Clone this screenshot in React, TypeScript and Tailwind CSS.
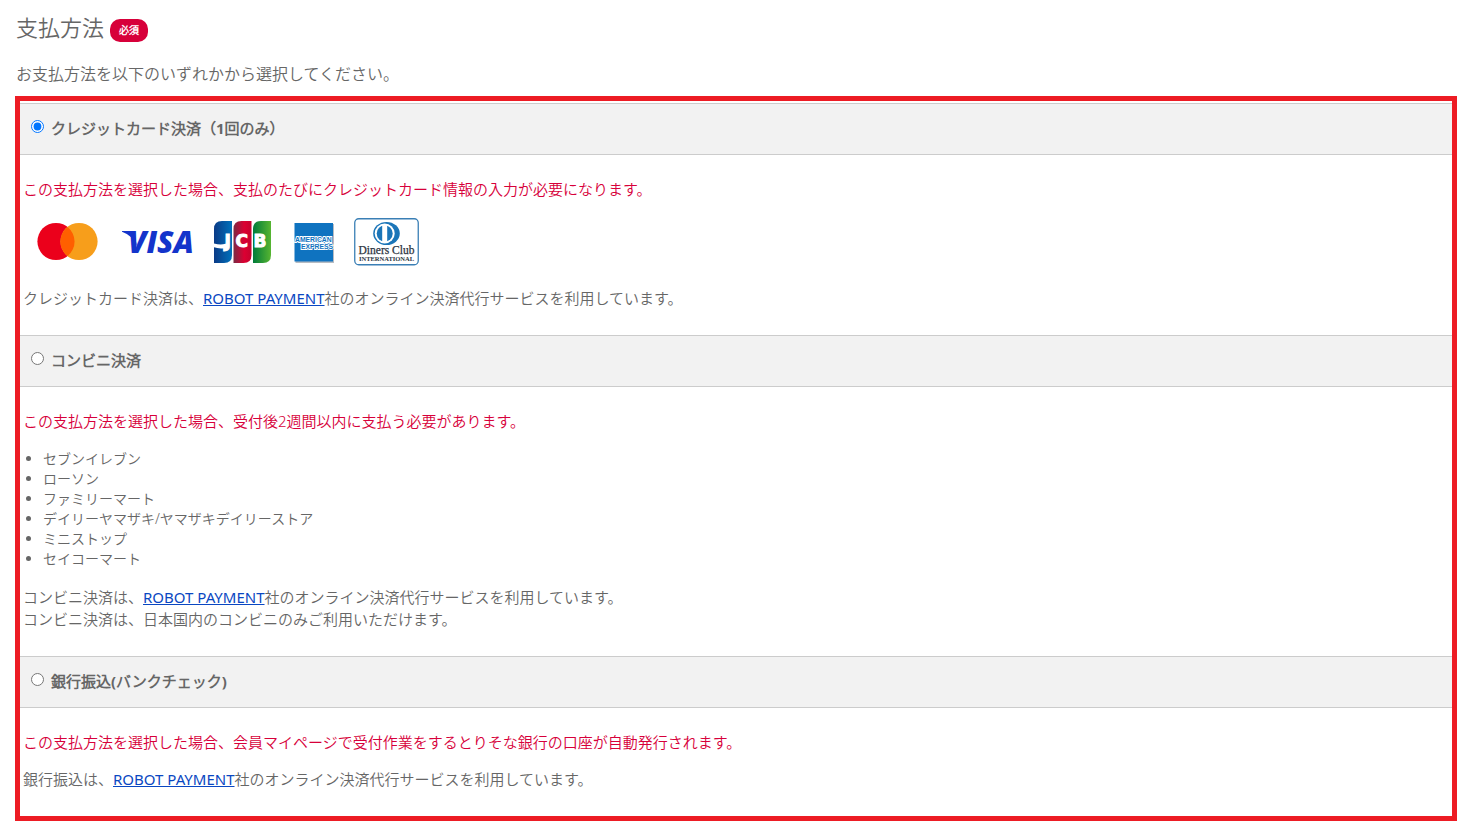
import { useState } from 'react';
import type { ReactNode } from 'react';

function MastercardLogo() {
  return (
    <svg role="img" aria-label="Mastercard" className="h-12 w-[65px]" viewBox="0 0 65 48">
      <circle cx="20" cy="23.5" r="18.6" fill="#eb001b" />
      <circle cx="43" cy="23.5" r="18.6" fill="#f79e1b" />
      <path d="M31.5 8.9a18.6 18.6 0 0 1 0 29.200a18.6 18.6 0 0 1 0-29.200z" fill="#ff5f00" />
    </svg>
  );
}

function VisaLogo() {
  return (
    <svg role="img" aria-label="Visa" className="h-12 w-[73px]" viewBox="0 0 73 48">
      <path d="M1 13h9.5q2.200 0 2.800 2.400l2.600 12.500Q11.500 17.500 1 13.800z" fill="#1434cb" />
      <text x="7" y="35.200" fill="#1434cb" fontFamily="'Open Sans', sans-serif" fontWeight="800" fontStyle="italic" fontSize="30">
        VISA
      </text>
    </svg>
  );
}

function JcbLogo() {
  return (
    <svg role="img" aria-label="JCB" className="h-12 w-[58px]" viewBox="0 0 58 48">
      <defs>
        <linearGradient id="jcb-blue">
          <stop offset="0" stopColor="#0a3a86" />
          <stop offset="1" stopColor="#0071bb" />
        </linearGradient>
        <linearGradient id="jcb-red">
          <stop offset="0" stopColor="#7b2a45" />
          <stop offset="0.6" stopColor="#dc0032" />
          <stop offset="1" stopColor="#c4032e" />
        </linearGradient>
        <linearGradient id="jcb-green">
          <stop offset="0" stopColor="#007b3a" />
          <stop offset="1" stopColor="#57b531" />
        </linearGradient>
      </defs>
      <path d="M8 3h10v34q0 8-8 8H0V11q0-8 8-8z" fill="url(#jcb-blue)" />
      <path d="M27.500 3h10v34q0 8-8 8h-10V11q0-8 8-8z" fill="url(#jcb-red)" />
      <path d="M47 3h10v34q0 8-8 8H39V11q0-8 8-8z" fill="url(#jcb-green)" />
      <path d="M0 25.500q5 1.300 9 .8l5-1v4.200q-3 1.200-7 1-4-.2-7-1.300z" fill="#fff" />
      <g fill="#fff" stroke="#fff" strokeWidth="1" fontFamily="'DejaVu Sans', sans-serif" fontWeight="700" fontSize="17">
        <text x="10.500" y="29">J</text>
        <text x="21.500" y="29">C</text>
        <text x="39.500" y="29">B</text>
      </g>
    </svg>
  );
}

function AmexLogo() {
  return (
    <svg role="img" aria-label="American Express" className="h-12 w-[42px]" viewBox="0 0 42 48">
      <rect x="3.500" y="6" width="38.500" height="39" fill="#b8bcc2" />
      <rect x="2.500" y="5" width="38.500" height="38.500" fill="#0f73c0" />
      <g
        fill="#0f73c0"
        stroke="#fff"
        strokeWidth="1.800"
        paintOrder="stroke"
        fontFamily="'Liberation Sans', Arial, sans-serif"
        fontWeight="700"
        fontSize="6.800"
      >
        <text x="3" y="23.500">AMERICAN</text>
        <text x="41" y="31" textAnchor="end">EXPRESS</text>
      </g>
    </svg>
  );
}

function DinersLogo() {
  return (
    <svg role="img" aria-label="Diners Club International" className="h-12 w-[65px]" viewBox="0 0 65 48">
      <rect x="0.750" y="0.750" width="63.500" height="46" rx="4" fill="#fff" stroke="#3a7fb5" strokeWidth="1.300" />
      <ellipse cx="32.500" cy="15.500" rx="13.300" ry="11.500" fill="#1b75b8" />
      <circle cx="30.700" cy="15.500" r="10" fill="#fff" />
      <circle cx="30.700" cy="15.500" r="8" fill="#1b75b8" />
      <rect x="28.200" y="6.500" width="5" height="18" fill="#fff" />
      <g fill="#2b3440" textAnchor="middle" fontFamily="'Liberation Serif', serif">
        <text x="32.500" y="36" fontSize="11.500" stroke="#2b3440" strokeWidth="0.250">Diners Club</text>
        <text x="32.500" y="42.500" fontSize="6.500" fontWeight="700">INTERNATIONAL</text>
      </g>
    </svg>
  );
}

function RobotPaymentLink() {
  return (
    <a href="#robot-payment" className="font-normal text-[#0a47c2] underline">
      ROBOT PAYMENT
    </a>
  );
}

type MethodProps = {
  id: string;
  title: string;
  checked: boolean;
  onSelect: (id: string) => void;
  children: ReactNode;
};

function Method({ id, title, checked, onSelect, children }: MethodProps) {
  return (
    <section>
      <div className="flex h-[52px] items-center gap-[7px] border-y border-[#ccc] bg-[#f2f2f2] pb-[2px] pl-[11px]">
        <input
          type="radio"
          id={id}
          name="payment-method"
          checked={checked}
          onChange={() => onSelect(id)}
          className="mb-1 size-[13px]"
        />
        <label htmlFor={id} className="font-bold">
          {title}
        </label>
      </div>
      <div className="px-[3px] pt-[23px] pb-[26px]">{children}</div>
    </section>
  );
}

const stores = [
  'セブンイレブン',
  'ローソン',
  'ファミリーマート',
  'デイリーヤマザキ/ヤマザキデイリーストア',
  'ミニストップ',
  'セイコーマート',
];

export default function App() {
  const [selected, setSelected] = useState('credit-card');

  return (
    <main
      lang="ja"
      className="bg-white pt-3 pr-[14px] pb-4 pl-[15px] font-['Noto_Sans','Noto_Sans_CJK_JP_DemiLight','Noto_Sans_CJK_JP',sans-serif] text-[15px] leading-[22px] font-[350] text-[#666]"
    >
      <div className="flex items-center gap-[6px] pl-px">
        <h2 className="text-[22px] leading-[30px] font-[350]">支払方法</h2>
        <span className="mt-[6px] rounded-[10px] bg-[#d7003a] px-[9px] text-[10px] leading-[23px] font-bold text-white">
          必須
        </span>
      </div>
      <p className="mt-5 mb-[10px] pl-px text-base leading-6">
        お支払方法を以下のいずれかから選択してください。
      </p>

      <div className="border-[5px] border-[#ed1c24] pt-[2px]">
        <Method id="credit-card" title="クレジットカード決済（1回のみ）" checked={selected === 'credit-card'} onSelect={setSelected}>
          <p className="text-[#d7003a]">
            この支払方法を選択した場合、支払のたびにクレジットカード情報の入力が必要になります。
          </p>
          <div className="mt-[18px] mb-[21px] flex gap-5 pl-[13px]">
            <MastercardLogo />
            <VisaLogo />
            <JcbLogo />
            <AmexLogo />
            <DinersLogo />
          </div>
          <p>
            クレジットカード決済は、
            <RobotPaymentLink />
            社のオンライン決済代行サービスを利用しています。
          </p>
        </Method>

        <Method id="convenience-store" title="コンビニ決済" checked={selected === 'convenience-store'} onSelect={setSelected}>
          <p className="text-[#d7003a]">この支払方法を選択した場合、受付後2週間以内に支払う必要があります。</p>
          <ul className="my-[17px] list-disc pl-5 text-sm leading-5">
            {stores.map((store) => (
              <li key={store}>{store}</li>
            ))}
          </ul>
          <p>
            コンビニ決済は、
            <RobotPaymentLink />
            社のオンライン決済代行サービスを利用しています。
            <br />
            コンビニ決済は、日本国内のコンビニのみご利用いただけます。
          </p>
        </Method>

        <Method id="bank-transfer" title="銀行振込(バンクチェック)" checked={selected === 'bank-transfer'} onSelect={setSelected}>
          <p className="mb-[15px] text-[#d7003a]">
            この支払方法を選択した場合、会員マイページで受付作業をするとりそな銀行の口座が自動発行されます。
          </p>
          <p>
            銀行振込は、
            <RobotPaymentLink />
            社のオンライン決済代行サービスを利用しています。
          </p>
        </Method>
      </div>
    </main>
  );
}
